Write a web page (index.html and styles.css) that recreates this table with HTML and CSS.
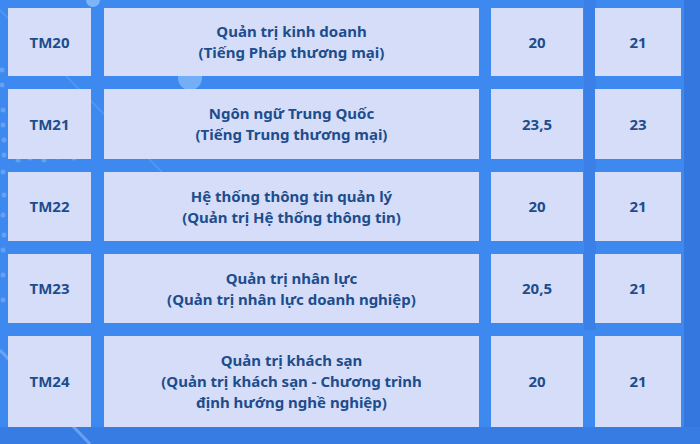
FILE: index.html
```html
<!DOCTYPE html>
<html lang="vi">
<head>
<meta charset="utf-8">
<link rel="stylesheet" href="styles.css">
</head>
<body>
<div class="page">
  <svg class="deco" width="700" height="444" viewBox="0 0 700 444" aria-hidden="true">
    <rect x="684" y="0" width="16" height="444" fill="#3478df"/>
    <rect x="584" y="0" width="12" height="330" fill="#3a80e6"/>
    <rect x="0" y="427" width="700" height="17" fill="#377ce2"/>
    <line x1="0" y1="10" x2="200" y2="210" stroke="#6aa6f5" stroke-width="1.5" opacity="0.6"/>
    <line x1="0" y1="350" x2="90" y2="444" stroke="#7cb2f7" stroke-width="3" opacity="0.7"/>
    <circle cx="93" cy="0" r="7" fill="#8fc0fa" opacity="0.8"/>
    <circle cx="190" cy="78" r="12" fill="#8cbdf9" opacity="0.7"/>
    <g fill="#6ea8f6" opacity="0.8">
      <circle cx="2" cy="70" r="2.5"/><circle cx="2" cy="85" r="2.5"/><circle cx="3" cy="110" r="2.5"/>
      <circle cx="3" cy="125" r="2.5"/><circle cx="4" cy="140" r="2.5"/><circle cx="4" cy="155" r="2.5"/>
      <circle cx="18" cy="160" r="2.5"/><circle cx="30" cy="158" r="2.5"/><circle cx="44" cy="160" r="2.5"/>
      <circle cx="58" cy="157" r="2.5"/><circle cx="74" cy="158" r="2.5"/><circle cx="3" cy="172" r="2.5"/>
      <circle cx="4" cy="195" r="2.5"/><circle cx="3" cy="215" r="2.5"/><circle cx="4" cy="235" r="2.5"/>
      <circle cx="3" cy="250" r="2.5"/><circle cx="3" cy="275" r="2.5"/><circle cx="3" cy="300" r="2.5"/>
    </g>
  </svg>
  <div class="grid">
    <div class="cell">TM20</div>
    <div class="cell">Quản trị kinh doanh<br>(Tiếng Pháp thương mại)</div>
    <div class="cell">20</div>
    <div class="cell">21</div>

    <div class="cell">TM21</div>
    <div class="cell">Ngôn ngữ Trung Quốc<br>(Tiếng Trung thương mại)</div>
    <div class="cell">23,5</div>
    <div class="cell">23</div>

    <div class="cell">TM22</div>
    <div class="cell">Hệ thống thông tin quản lý<br>(Quản trị Hệ thống thông tin)</div>
    <div class="cell">20</div>
    <div class="cell">21</div>

    <div class="cell">TM23</div>
    <div class="cell">Quản trị nhân lực<br>(Quản trị nhân lực doanh nghiệp)</div>
    <div class="cell">20,5</div>
    <div class="cell">21</div>

    <div class="cell">TM24</div>
    <div class="cell">Quản trị khách sạn<br>(Quản trị khách sạn - Chương trình<br>định hướng nghề nghiệp)</div>
    <div class="cell">20</div>
    <div class="cell">21</div>
  </div>
</div>
</body>
</html>
```
FILE: styles.css
```css
html, body {
  margin: 0;
  padding: 0;
}
body {
  width: 700px;
  height: 444px;
  overflow: hidden;
  background: #3e89ef;
  font-family: "Noto Sans", "Open Sans", sans-serif;
}
.page {
  position: relative;
  width: 700px;
  height: 444px;
}
.deco {
  position: absolute;
  left: 0;
  top: 0;
}
.grid {
  position: relative;
  display: grid;
  grid-template-columns: 83px 376px 92px 86px;
  grid-template-rows: 68px 70px 69px 69px 91px;
  column-gap: 12px;
  row-gap: 13px;
  padding: 8px 0 0 8px;
}
.grid .cell:nth-child(4n+2) {
  margin-left: 1px;
}
.cell {
  background: #d6ddf9;
  color: #1d4d8c;
  font-weight: 700;
  font-size: 15px;
  line-height: 21px;
  text-align: center;
  display: flex;
  align-items: center;
  justify-content: center;
}
```
